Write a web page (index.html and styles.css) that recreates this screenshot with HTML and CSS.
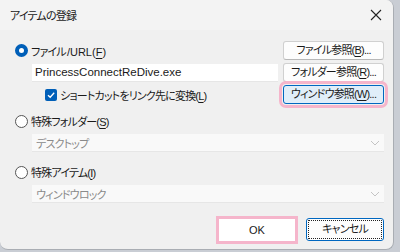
FILE: index.html
```html
<!DOCTYPE html>
<html lang="ja">
<head>
    <meta charset="UTF-8">
    <title>アイテムの登録</title>
    <link rel="stylesheet" href="styles.css">
</head>
<body>
    <div class="window">
        <div class="titlebar">
            <span class="title">アイテムの登録</span>
            <span class="close">
                <svg width="12" height="12" viewBox="0 0 12 12"><path d="M1 1 L11 11 M11 1 L1 11" stroke="#222" stroke-width="1.1" fill="none"/></svg>
            </span>
        </div>

        <div class="content">
            <div class="file-section">
                <div class="left">
                    <label class="radio-row first">
                        <span class="radio checked"></span>
                        <span>ファイル<span class="latin">/URL(<u>F</u>)</span></span>
                    </label>
                    <div class="textbox">PrincessConnectReDive.exe</div>
                    <label class="check-row">
                        <span class="checkbox">
                            <svg width="10" height="10" viewBox="0 0 10 10"><path d="M2 5.2 L4.2 7.3 L8.2 2.8" stroke="#fff" stroke-width="1.3" fill="none"/></svg>
                        </span>
                        <span>ショートカットをリンク先に変換(<u>L</u>)</span>
                    </label>
                </div>
                <div class="right">
                    <button class="btn">ファイル参照(<u>B</u>)...</button>
                    <button class="btn">フォルダー参照(<u>R</u>)...</button>
                    <button class="btn hover marked">ウィンドウ参照(<u>W</u>)...</button>
                </div>
            </div>

            <label class="radio-row section-folder">
                <span class="radio"></span>
                <span>特殊フォルダー(<u>S</u>)</span>
            </label>
            <div class="select">
                <span>デスクトップ</span>
                <svg width="10" height="6" viewBox="0 0 10 6"><path d="M1 1 L5 5 L9 1" stroke="#c4c4c4" stroke-width="1" fill="none"/></svg>
            </div>

            <label class="radio-row section-item">
                <span class="radio"></span>
                <span>特殊アイテム(<u>I</u>)</span>
            </label>
            <div class="select">
                <span>ウィンドウロック</span>
                <svg width="10" height="6" viewBox="0 0 10 6"><path d="M1 1 L5 5 L9 1" stroke="#c4c4c4" stroke-width="1" fill="none"/></svg>
            </div>

            <div class="actions">
                <button class="btn ok marked-ok">OK</button>
                <button class="btn cancel">キャンセル</button>
            </div>
        </div>
    </div>
</body>
</html>
```

FILE: styles.css
```css
body {
    margin: 0;
    width: 400px;
    height: 252px;
    background: #c9cdd4;
    font-family: "Liberation Sans", "Noto Sans CJK JP", sans-serif;
    font-size: 11px;
    letter-spacing: -0.8px;
    font-feature-settings: "palt" 1;
    color: #1a1a1a;
    overflow: hidden;
    white-space: nowrap;
}
u {
    text-decoration: underline;
    text-underline-offset: 2px;
}
.latin {
    letter-spacing: 0;
    margin-left: 1px;
}
.window {
    width: 394px;
    height: 250px;
    background: #f0f0f0;
    border-right: 1px solid #a9adb3;
    border-bottom: 1px solid #a9adb3;
    border-radius: 0 8px 8px 8px;
    box-sizing: border-box;
    overflow: hidden;
}
.titlebar {
    height: 30px;
    display: flex;
    align-items: center;
    justify-content: space-between;
    padding: 0 10px 0 10px;
    background: #f3f3f3;
}
.close {
    display: flex;
    margin-right: 1px;
}
.content {
    padding: 11px 9px 0 15px;
}
.file-section {
    display: flex;
    justify-content: space-between;
}
.left {
    flex: 1;
}
.right {
    width: 101px;
    display: flex;
    flex-direction: column;
    gap: 3px;
}
.radio-row {
    display: flex;
    align-items: center;
    gap: 3px;
    height: 16px;
}
.radio-row.first {
    height: 19px;
}
.radio {
    width: 11px;
    height: 11px;
    border: 1px solid #555;
    border-radius: 50%;
    background: #fff;
    box-sizing: content-box;
}
.radio.checked {
    width: 5px;
    height: 5px;
    border: 4px solid #005fb8;
    background: #fff;
}
.textbox {
    margin: 4px 5px 0 17px;
    height: 17px;
    line-height: 17px;
    background: #fff;
    border-bottom: 1px solid #e6e6e6;
    padding-left: 3px;
    font-size: 11.5px;
    letter-spacing: 0;
}
.check-row {
    display: flex;
    align-items: center;
    gap: 3px;
    margin: 3px 0 0 30px;
    height: 19px;
}
.checkbox {
    width: 12px;
    height: 12px;
    border-radius: 2px;
    background: #005fb8;
    display: flex;
    align-items: center;
    justify-content: center;
}
.btn {
    font-family: inherit;
    font-size: 11px;
    letter-spacing: -0.8px;
    font-feature-settings: "palt" 1;
    color: #1a1a1a;
    height: 19px;
    padding: 0;
    background: #fdfdfd;
    border: 1px solid #d0d0d0;
    border-bottom-color: #b8b8b8;
    border-radius: 3px;
    line-height: 17px;
    white-space: nowrap;
}
.btn.hover {
    background: #e0eef9;
    border-color: #0067c0;
}
.marked {
    outline: 3px solid #f5b5cb;
    outline-offset: 1px;
}
.section-folder {
    margin-top: 9px;
}
.section-item {
    margin-top: 12px;
}
.select {
    margin: 5px 0 0 17px;
    height: 17px;
    display: flex;
    align-items: center;
    justify-content: space-between;
    padding: 0 4px;
    background: #f9f9f9;
    border-bottom: 1px solid #e6e6e6;
    color: #8a8a8a;
}
.actions {
    display: flex;
    justify-content: flex-end;
    gap: 11px;
    margin-top: 16px;
}
.ok {
    width: 76px;
    height: 22px;
    background: #fff;
    border: none;
    border-radius: 0;
    letter-spacing: 0;
}
.marked-ok {
    outline: 3px solid #f5b5cb;
    outline-offset: 0;
}
.cancel {
    width: 78px;
    height: 23px;
    margin-top: -1px;
    border: 1px solid #0067c0;
    outline: 1px dotted #222;
    outline-offset: -3px;
}
```
